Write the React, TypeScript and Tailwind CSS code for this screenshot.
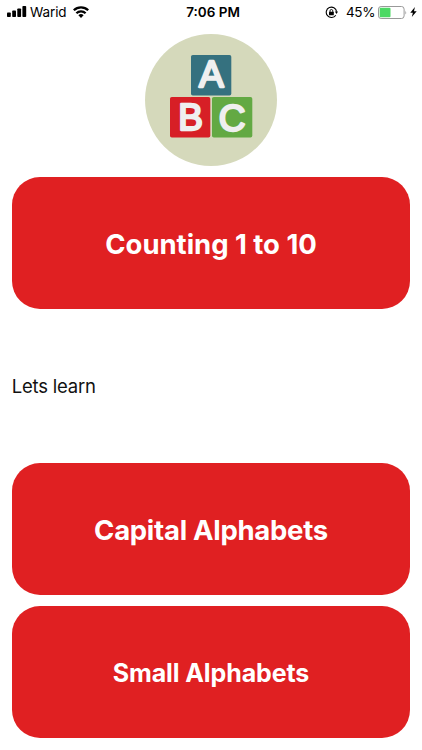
import clsx from 'clsx'

type MenuButtonProps = {
  label: string
  className?: string
}

function SignalIcon() {
  return (
    <svg className="mb-px h-[11px] w-5" viewBox="0 0 20 11" fill="#000">
      <rect x="0" y="6.4" width="3.8" height="4.6" rx="0.8" />
      <rect x="5.2" y="4.5" width="3.8" height="6.5" rx="0.8" />
      <rect x="10.3" y="2.4" width="3.8" height="8.6" rx="0.8" />
      <rect x="15.4" y="0" width="3.8" height="11" rx="0.8" />
    </svg>
  )
}

function WifiIcon() {
  return (
    <svg className="mb-px h-3 w-4" viewBox="0 0 16 12" fill="none" stroke="#000" strokeWidth="2.3">
      <path d="M0.8 4.3a10.2 10.2 0 0 1 14.4 0" />
      <path d="M3.4 7.2a6.5 6.5 0 0 1 9.2 0" />
      <path d="M8 11.9 5.4 9.3a3.7 3.7 0 0 1 5.2 0z" fill="#000" stroke="none" />
    </svg>
  )
}

function RotationLockIcon() {
  return (
    <svg className="h-[13px] w-[13px]" viewBox="0 0 13 13" fill="none" stroke="#000">
      <path d="M10.8 9.2A5.2 5.2 0 1 1 11.6 5.6" strokeWidth="1.1" />
      <path d="M9.9 5.5h3.1l-1.5 2.4z" fill="#000" stroke="none" />
      <rect x="4" y="5.8" width="4.8" height="3.5" rx="0.5" fill="#000" stroke="none" />
      <path d="M5 6V4.9a1.4 1.4 0 0 1 2.8 0V6" strokeWidth="0.9" />
    </svg>
  )
}

function BatteryIcon() {
  return (
    <svg className="h-[13px] w-[29px]" viewBox="0 0 29 13">
      <rect x="0.5" y="0.5" width="25.6" height="12" rx="2.6" fill="#fff" stroke="#999" />
      <rect x="1.7" y="1.7" width="10.8" height="9.6" rx="1" fill="#4cd964" />
      <path d="M27.4 4.5q1.5 2 0 4z" fill="#999" />
    </svg>
  )
}

function StatusBar() {
  return (
    <header className="grid h-6 grid-cols-3 items-center text-[13.5px] text-black">
      <div className="flex items-center pl-[7px]">
        <SignalIcon />
        <span className="ml-[3px] w-[36px] tracking-[-0.1px]">Warid</span>
        <span className="ml-[7px]">
          <WifiIcon />
        </span>
      </div>
      <span className="pl-1 text-center font-semibold">7:06 PM</span>
      <div className="flex items-center justify-end pr-[5px]">
        <RotationLockIcon />
        <span className="ml-2 w-[31px] tracking-[-0.4px]">45%</span>
        <span className="ml-px">
          <BatteryIcon />
        </span>
        <svg className="ml-[3px] h-[10px] w-[7px]" viewBox="0 0 7 10">
          <path d="M4.9 0 0.3 5.7h2.6L1.8 10 6.7 4.2H4z" fill="#000" />
        </svg>
      </div>
    </header>
  )
}

function Logo() {
  return (
    <svg className="h-[132px] w-[132px]" viewBox="0 0 132 132">
      <circle cx="66" cy="66" r="66" fill="#d5d9bb" />
      <rect x="46" y="21" width="40.3" height="40.5" rx="1.8" fill="#35717f" />
      <rect x="25" y="63" width="40.3" height="40.5" rx="1.8" fill="#d71f26" />
      <rect x="67" y="63" width="40.3" height="40.5" rx="1.8" fill="#63a943" />
      <g
        className="font-['Liberation_Sans'] text-[37px]"
        fill="#efefef"
        stroke="#efefef"
        strokeWidth="2.3"
        strokeLinejoin="round"
        textAnchor="middle"
      >
        <text x="66.3" y="53.3">A</text>
        <text x="45.5" y="96.2">B</text>
        <text x="87.2" y="97.2">C</text>
      </g>
    </svg>
  )
}

function MenuButton({ label, className }: MenuButtonProps) {
  return (
    <button
      className={clsx(
        'flex h-[131.7px] w-full shrink-0 items-center justify-center rounded-[28px] bg-[#e02022] font-bold text-white',
        className,
      )}
    >
      {label}
    </button>
  )
}

export default function App() {
  return (
    <div className="flex h-[750px] flex-col overflow-hidden bg-white font-['Inter',sans-serif]">
      <StatusBar />
      <main className="flex flex-col px-[11.7px] pt-[10px]">
        <div className="flex h-[143.3px] justify-center">
          <Logo />
        </div>
        <MenuButton label="Counting 1 to 10" className="pt-[2px] text-[27.5px] tracking-[-0.03px]" />
        <p className="flex h-[154px] items-center pt-px text-[18.5px] tracking-[-0.2px] text-[#111]">
          Lets learn
        </p>
        <MenuButton label="Capital Alphabets" className="pt-[4px] text-[27.5px] tracking-[-0.28px]" />
        <MenuButton label="Small Alphabets" className="mt-[11.6px] pt-[3px] text-[25px] tracking-[-0.1px]" />
      </main>
    </div>
  )
}
